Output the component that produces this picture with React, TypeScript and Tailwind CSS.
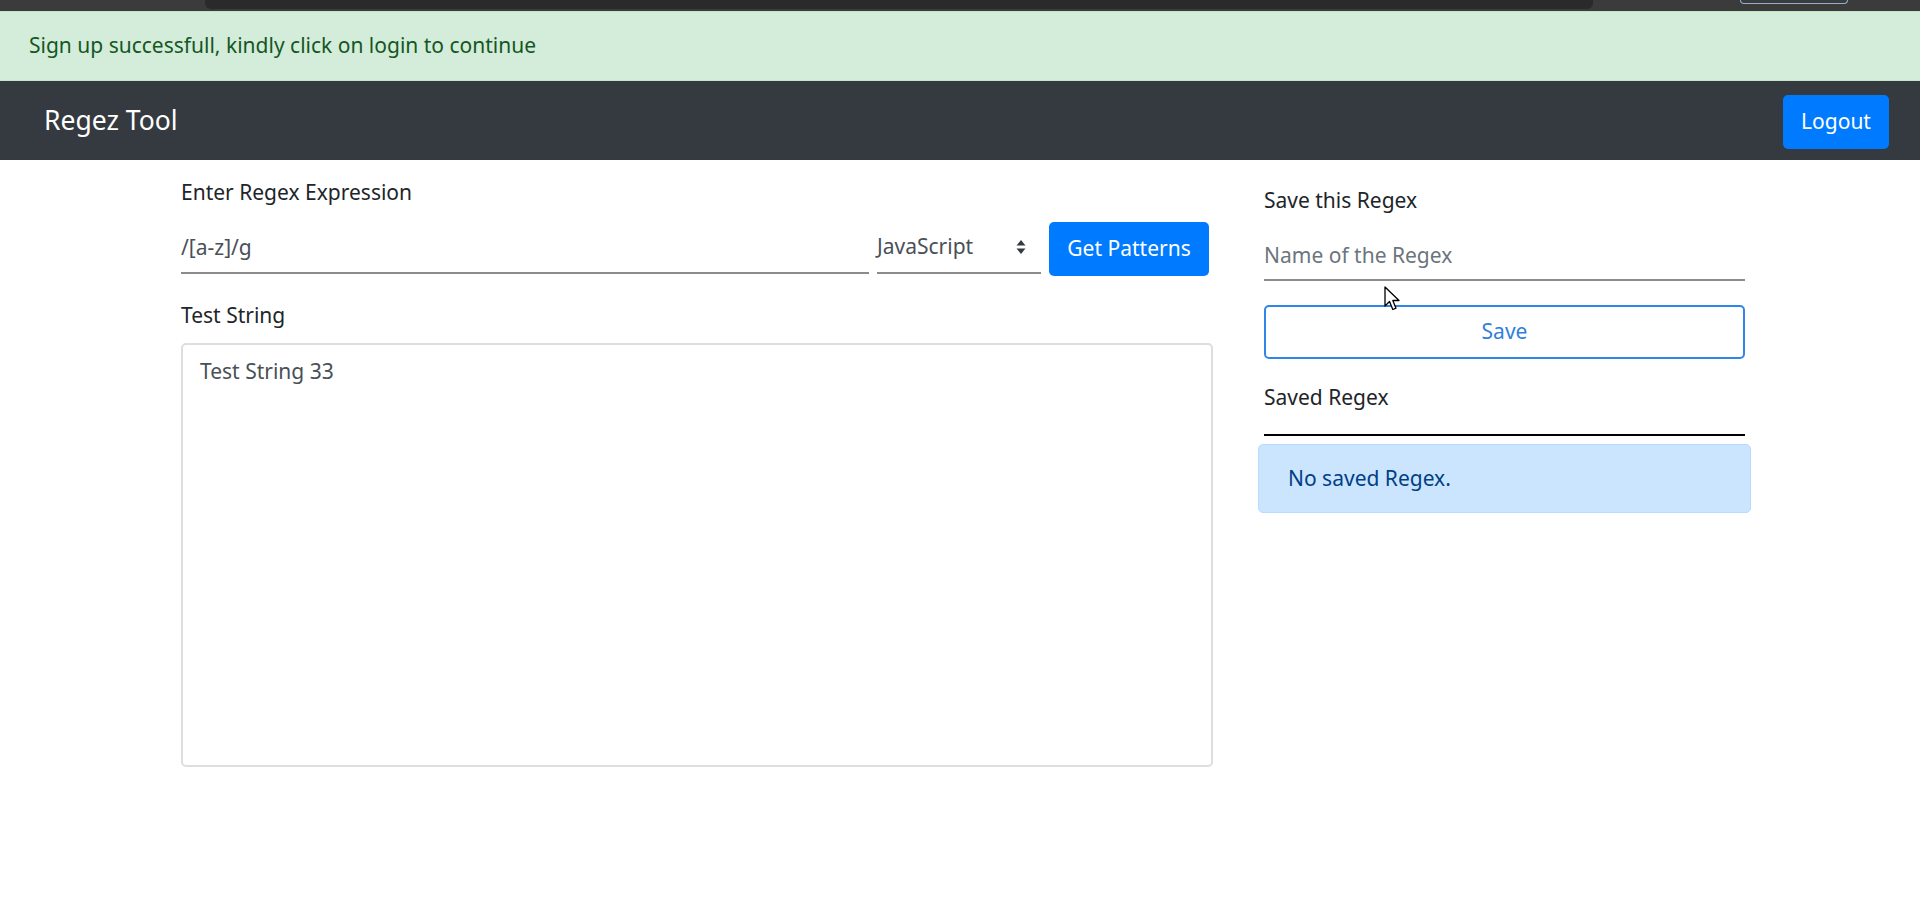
import React, { useState } from 'react';

// small up/down chevrons used by the language select
function SelectArrows() {
  return (
    <svg width="10" height="16" viewBox="0 0 10 16" className="shrink-0">
      <path d="M5 1 L9.5 6.5 H0.5 Z" fill="#343a40" />
      <path d="M5 15 L9.5 9.5 H0.5 Z" fill="#343a40" />
    </svg>
  );
}

function MouseCursor() {
  return (
    <svg width="18" height="26" viewBox="0 0 18 26" className="absolute left-[120px] top-[126px] pointer-events-none">
      <path
        d="M1 1 L1 20 L5.5 15.5 L8.8 23.5 L12 22.2 L8.8 14.5 L15 14.5 Z"
        fill="#ffffff"
        stroke="#000000"
        strokeWidth="1.3"
        strokeLinejoin="round"
      />
    </svg>
  );
}

export default function App() {
  const [regex, setRegex] = useState('/[a-z]/g');
  const [testString, setTestString] = useState('Test String 33');
  const [name, setName] = useState('');

  return (
    <div className="min-h-screen bg-white font-['Noto_Sans','Open_Sans',sans-serif] text-[21px] text-[#212529]">
      {/* browser chrome remnant */}
      <div className="h-[11px] bg-[#3b3b3b] flex items-start">
        <div className="ml-[205px] w-[1388px] h-[9px] bg-[#2a2a2a] rounded-bl-[6px] rounded-br-[6px]" />
        <div className="ml-[147px] w-[108px] h-[4px] border border-t-0 border-[#8fb0d0] rounded-b-[8px]" />
      </div>

      {/* success alert */}
      <div className="h-[70px] bg-[#d4edda] border-y border-[#c3e6cb] flex items-center pl-[29px] text-[#155724]">
        Sign up successfull, kindly click on login to continue
      </div>

      {/* navbar */}
      <nav className="h-[79px] bg-[#343a40] flex items-center justify-between pl-[44px] pr-[31px]">
        <span className="text-[26.5px] text-white">Regez Tool</span>
        <button className="w-[106px] h-[54px] bg-[#007bff] rounded-[5px] text-white text-[21px] mt-[2px]">
          Logout
        </button>
      </nav>

      <main className="flex pl-[181px]">
        {/* left column */}
        <section className="w-[1032px] pt-[17px] flex flex-col">
          <label className="h-[30px] leading-[30px]">Enter Regex Expression</label>
          <div className="mt-[15px] flex items-start gap-[8px]">
            <input
              value={regex}
              onChange={(e) => setRegex(e.target.value)}
              className="w-[688px] h-[52px] border-b-2 border-[#8c8c8c] outline-none text-[#495057] bg-transparent"
            />
            <div className="w-[164px] h-[52px] border-b-2 border-[#8c8c8c] flex items-center justify-between pr-[15px] text-[#495057]">
              <span>JavaScript</span>
              <SelectArrows />
            </div>
            <button className="w-[160px] h-[54px] bg-[#007bff] rounded-[5px] text-white">
              Get Patterns
            </button>
          </div>

          <label className="mt-[24px] h-[30px] leading-[30px]">Test String</label>
          <textarea
            value={testString}
            onChange={(e) => setTestString(e.target.value)}
            className="mt-[13px] h-[424px] w-full border-2 border-[#dedede] rounded-[5px] px-[17px] pt-[11px] resize-none outline-none text-[#495057] leading-[30px]"
          />
        </section>

        {/* right column */}
        <aside className="relative ml-[51px] w-[481px] pt-[25px] flex flex-col">
          <label className="h-[30px] leading-[30px]">Save this Regex</label>
          <input
            value={name}
            onChange={(e) => setName(e.target.value)}
            placeholder="Name of the Regex"
            className="mt-[16px] h-[50px] border-b-2 border-[#8c8c8c] outline-none bg-transparent text-[#495057] placeholder:text-[#6c757d]"
          />
          <button className="mt-[24px] h-[54px] border-2 border-[#2f86e8] rounded-[5px] text-[#2f7fdc]">
            Save
          </button>
          <div className="mt-[23px] h-[54px] border-b-2 border-black leading-[30px]">Saved Regex</div>
          <div className="mt-[8px] -mx-[6px] h-[69px] bg-[#cce5ff] border border-[#b8daff] rounded-[5px] flex items-center pl-[29px] text-[#004085]">
            No saved Regex.
          </div>
          <MouseCursor />
        </aside>
      </main>
    </div>
  );
}
